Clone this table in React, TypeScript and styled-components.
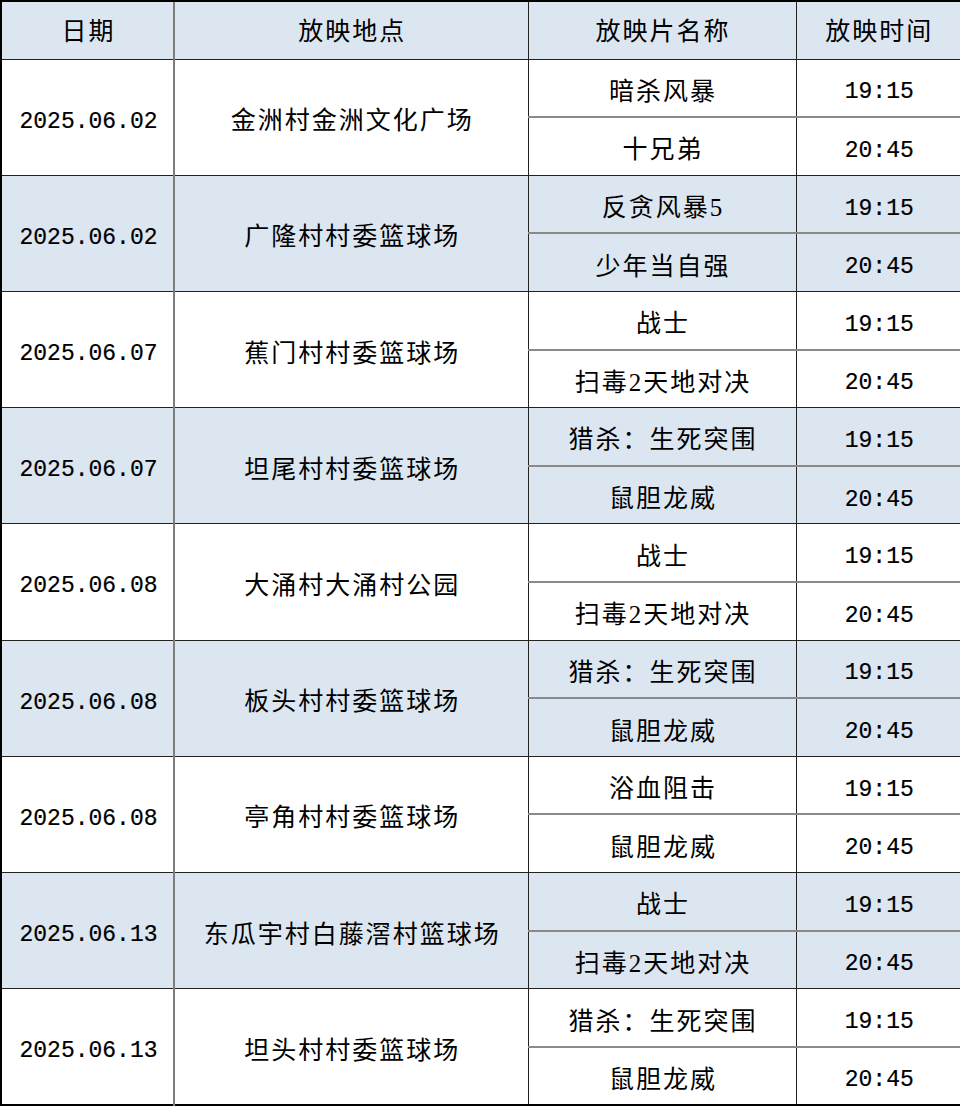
import React from "react";
import styled, { createGlobalStyle } from "styled-components";

const GlobalStyle = createGlobalStyle`
  html, body {
    margin: 0;
    padding: 0;
    background: #ffffff;
  }
  body {
    font-family: "Liberation Serif", "Noto Sans CJK SC", serif;
    color: #000;
  }
`;

const Table = styled.table`
  width: 960px;
  height: 1106px;
  table-layout: fixed;
  border-collapse: collapse;
  border: 2px solid #000;
  box-sizing: border-box;
`;

const Col = styled.col<{ $w: number }>`
  width: ${(p) => p.$w}px;
`;

const Row = styled.tr<{ $shade: boolean }>`
  height: 58px;
  background: ${(p) => (p.$shade ? "#dce6f1" : "#ffffff")};
`;

const HeadCell = styled.th<{ $split?: boolean }>`
  font-family: "Noto Sans CJK SC", sans-serif;
  font-weight: 400;
  font-size: 25px;
  letter-spacing: 2px;
  text-align: center;
  vertical-align: middle;
  padding: 0 0 2px 2px;
  border-top: 2px solid #000;
  border-bottom: 1px solid #222;
  border-left: ${(p) => (p.$split ? "2px solid #7d7d7d" : "1px solid #222")};
`;

const Cell = styled.td<{ $mono?: boolean; $split?: boolean; $sub?: boolean }>`
  font-family: ${(p) =>
    p.$mono
      ? `"Liberation Mono", monospace`
      : `"Liberation Serif", "Noto Sans CJK SC", serif`};
  font-size: ${(p) => (p.$mono ? "23px" : "25px")};
  letter-spacing: ${(p) => (p.$mono ? "0px" : "2px")};
  text-align: center;
  vertical-align: middle;
  padding: ${(p) => (p.$mono ? "9px 0 0 2px" : "2px 0 0 2px")};
  white-space: nowrap;
  border-left: ${(p) => (p.$split ? "2px solid #7d7d7d" : "1px solid #222")};
  border-bottom: ${(p) => (p.$sub ? "2px solid #8a8a8a" : "1px solid #222")};
`;

const Mono = styled.span`
  -webkit-text-stroke: 0.2px #000;
`;

type Screening = {
  date: string;
  place: string;
  films: [string, string];
};

const data: Screening[] = [
  { date: "2025.06.02", place: "金洲村金洲文化广场", films: ["暗杀风暴", "十兄弟"] },
  { date: "2025.06.02", place: "广隆村村委篮球场", films: ["反贪风暴5", "少年当自强"] },
  { date: "2025.06.07", place: "蕉门村村委篮球场", films: ["战士", "扫毒2天地对决"] },
  { date: "2025.06.07", place: "坦尾村村委篮球场", films: ["猎杀：生死突围", "鼠胆龙威"] },
  { date: "2025.06.08", place: "大涌村大涌村公园", films: ["战士", "扫毒2天地对决"] },
  { date: "2025.06.08", place: "板头村村委篮球场", films: ["猎杀：生死突围", "鼠胆龙威"] },
  { date: "2025.06.08", place: "亭角村村委篮球场", films: ["浴血阻击", "鼠胆龙威"] },
  { date: "2025.06.13", place: "东瓜宇村白藤滘村篮球场", films: ["战士", "扫毒2天地对决"] },
  { date: "2025.06.13", place: "坦头村村委篮球场", films: ["猎杀：生死突围", "鼠胆龙威"] },
];

const times = ["19:15", "20:45"];

export default function App() {
  return (
    <>
      <GlobalStyle />
      <Table>
        <colgroup>
          <Col $w={173} />
          <Col $w={354} />
          <Col $w={268} />
          <Col $w={165} />
        </colgroup>
        <thead>
          <Row $shade>
            <HeadCell>日期</HeadCell>
            <HeadCell $split>放映地点</HeadCell>
            <HeadCell>放映片名称</HeadCell>
            <HeadCell>放映时间</HeadCell>
          </Row>
        </thead>
        <tbody>
          {data.map((s, i) => {
            const shade = i % 2 === 1;
            return (
              <React.Fragment key={i}>
                <Row $shade={shade}>
                  <Cell rowSpan={2} $mono>
                    <Mono>{s.date}</Mono>
                  </Cell>
                  <Cell rowSpan={2} $split>
                    {s.place}
                  </Cell>
                  <Cell $sub>{s.films[0]}</Cell>
                  <Cell $sub $mono>
                    <Mono>{times[0]}</Mono>
                  </Cell>
                </Row>
                <Row $shade={shade}>
                  <Cell>{s.films[1]}</Cell>
                  <Cell $mono>
                    <Mono>{times[1]}</Mono>
                  </Cell>
                </Row>
              </React.Fragment>
            );
          })}
        </tbody>
      </Table>
    </>
  );
}
